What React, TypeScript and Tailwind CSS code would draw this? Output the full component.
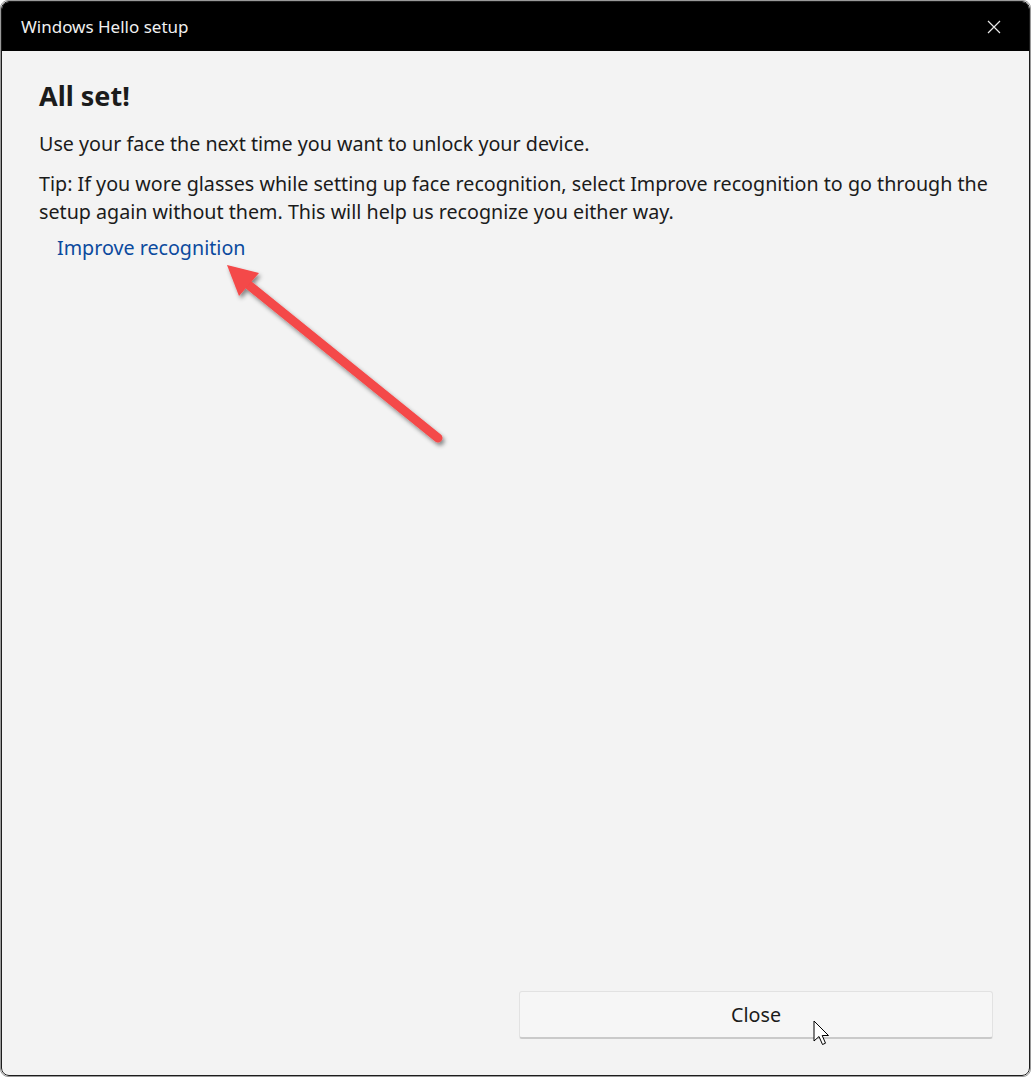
import React from 'react';

const font = { fontFamily: '"Segoe UI", "Noto Sans", "Liberation Sans", sans-serif' };

function RedArrow() {
  return (
    <svg className="absolute left-0 top-0 pointer-events-none" width="1032" height="1078" viewBox="0 0 1032 1078">
      <defs>
        <filter id="sh" x="-20%" y="-20%" width="140%" height="140%">
          <feDropShadow dx="2" dy="3" stdDeviation="2" floodColor="#000" floodOpacity="0.45" />
        </filter>
      </defs>
      <g filter="url(#sh)">
        <line x1="438" y1="438" x2="245" y2="282" stroke="#f44848" strokeWidth="9" strokeLinecap="round" />
        <polygon points="227,265 259,273 239,296" fill="#f44848" />
      </g>
    </svg>
  );
}

function Cursor() {
  return (
    <svg className="absolute left-[813px] top-[1020px] pointer-events-none" width="20" height="30" viewBox="0 0 20 30">
      <path d="M1 1 L1 21 L6 16.5 L9.5 24.5 L12.5 23.2 L9.2 15.5 L15.5 15.5 Z" fill="#fff" stroke="#000" strokeWidth="1" strokeLinejoin="round" />
    </svg>
  );
}

export default function App() {
  return (
    <div className="relative w-[1032px] h-[1078px] bg-white" style={font}>
      <div className="w-[1031px] h-[1077px] rounded-lg border border-[#9a9a9a] overflow-hidden">
        <div className="w-full h-full rounded-lg border border-[#1c1c1c] overflow-hidden flex flex-col bg-[#f3f3f3]">
          <div className="h-[49px] bg-black flex items-center justify-between pl-[19px] pr-[28px] shrink-0">
            <span className="text-[17px] text-[#f0f0f0] leading-none">Windows Hello setup</span>
            <svg width="14" height="14" viewBox="0 0 14 14">
              <path d="M1 1 L13 13 M13 1 L1 13" stroke="#e8e8e8" strokeWidth="1.2" />
            </svg>
          </div>
          <div className="flex-1 flex flex-col pl-[37px] pr-[36px] pt-[27px] pb-[36px] text-[#1b1b1b]">
            <h1 className="text-[27px] font-bold leading-[36px]">All set!</h1>
            <p className="mt-[16px] text-[19.7px] leading-[28px]">Use your face the next time you want to unlock your device.</p>
            <p className="mt-[12px] text-[19.7px] leading-[28px]">
              Tip: If you wore glasses while setting up face recognition, select Improve recognition to go through the setup again without them. This will help us recognize you either way.
            </p>
            <a className="mt-[8px] ml-[18px] text-[19.7px] leading-[28px] text-[#0b4a9e] self-start cursor-pointer">Improve recognition</a>
            <div className="flex-1" />
            <div className="flex justify-end">
              <button className="w-[474px] h-[48px] bg-[#f6f6f6] border border-[#e2e2e2] border-b-[#cacaca] border-b-2 rounded-[3px] text-[19.7px] text-[#1b1b1b]">
                Close
              </button>
            </div>
          </div>
        </div>
      </div>
      <RedArrow />
      <Cursor />
    </div>
  );
}
